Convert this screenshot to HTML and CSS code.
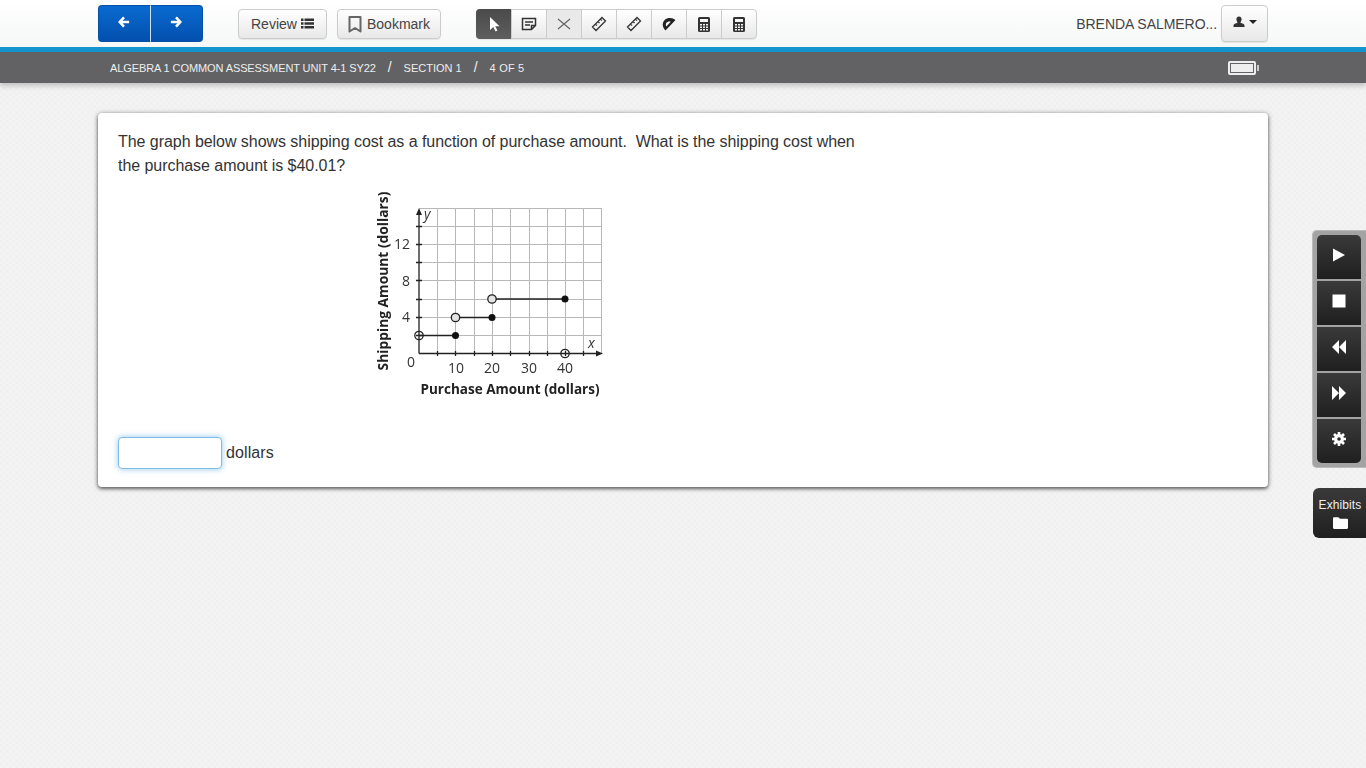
FILE: index.html
```html
<!DOCTYPE html>
<html lang="en">
<head>
<meta charset="utf-8">
<title>Assessment</title>
<link rel="stylesheet" href="styles.css">
</head>
<body>
<header class="topbar">
  <div class="wrap topbar-row">
    <div class="nav-group">
      <button class="nav-btn nav-left" aria-label="Previous"><svg width="12" height="12" viewBox="0 0 14 14"><path d="M7 1.500 2 7l5 5.500M3 7h10" fill="none" stroke="#fff" stroke-width="3"/></svg></button>
      <button class="nav-btn nav-right" aria-label="Next"><svg width="12" height="12" viewBox="0 0 14 14"><path d="M7 1.500 12 7l-5 5.500M11 7H1" fill="none" stroke="#fff" stroke-width="3"/></svg></button>
    </div>
    <button class="btn btn-review">Review <svg class="list-icon" width="13" height="11" viewBox="0 0 13 11"><path d="M0 .5h2.500v2.500H0zM3.500 .5H13v2.500H3.500zM0 4.300h2.500v2.500H0zM3.500 4.300H13v2.500H3.500zM0 8h2.500v2.500H0zM3.500 8H13v2.500H3.500z" fill="#333"/></svg></button>
    <button class="btn btn-bookmark"><svg width="14" height="17" viewBox="0 0 14 17"><path d="M1.500 1h11v14.500L7 12l-5.500 3.500z" fill="none" stroke="#666" stroke-width="2" stroke-linejoin="round"/></svg>Bookmark</button>
    <div class="tools">
      <span class="tool tool-active"><svg width="14" height="16" viewBox="0 0 14 16"><path d="M3 1v13l3.300-3 2.300 4.500 1.800-.9-2.200-4.300H12.500z" fill="#fff"/></svg></span>
      <span class="tool"><svg width="16" height="14" viewBox="0 0 16 14"><path d="M1.500 1.500h13v7l-4 4h-9zM4 5h8M4 8h5M10.500 12.500V8.500h4" fill="none" stroke="#333" stroke-width="1.500"/></svg></span>
      <span class="tool tool-off"><svg width="14" height="12" viewBox="0 0 14 12"><path d="M1 1l12 10M13 1 1 11" fill="none" stroke="#666" stroke-width="1.200"/></svg></span>
      <span class="tool"><svg width="16" height="16" viewBox="0 0 16 16"><path d="M1.500 11 11 1.500l3.500 3.500L5 14.500zM4.500 8l1.500 1.500M7 5.500 8.500 7M9.500 3l1.500 1.500" fill="none" stroke="#333" stroke-width="1.300"/></svg></span>
      <span class="tool"><svg width="16" height="16" viewBox="0 0 16 16"><path d="M1.500 11 11 1.500l3.500 3.500L5 14.500zM4.500 8l1.500 1.500M7 5.500 8.500 7M9.500 3l1.500 1.500" fill="none" stroke="#333" stroke-width="1.300"/></svg></span>
      <span class="tool"><svg width="14" height="14" viewBox="0 0 14 14"><path fill-rule="evenodd" d="M3.500 13.500 13.500 3C10.500.3 5.500.2 2.700 2.900S0 10.300 3.500 13.500zM4.300 9.500 8.800 4.700C7 4 5.200 4.600 4.400 5.800S3.700 8.300 4.300 9.500z" fill="#222"/></svg></span>
      <span class="tool"><svg width="12" height="15" viewBox="0 0 12 15"><path fill-rule="evenodd" d="M1.500 0h9A1.500 1.500 0 0 1 12 1.500v12a1.500 1.500 0 0 1-1.500 1.500h-9A1.500 1.500 0 0 1 0 13.500v-12A1.500 1.500 0 0 1 1.500 0zM2 2v3h8V2zM2 7v1.500h2V7zm3 0v1.500h2V7zm3 0v1.500h2V7zM2 9.500V11h2V9.500zm3 0V11h2V9.500zm3 0V11h2V9.500zM2 12v1.500h2V12zm3 0v1.500h2V12zm3 0v1.500h2V12z" fill="#333"/></svg></span>
      <span class="tool"><svg width="12" height="15" viewBox="0 0 12 15"><path fill-rule="evenodd" d="M1.500 0h9A1.500 1.500 0 0 1 12 1.500v12a1.500 1.500 0 0 1-1.500 1.500h-9A1.500 1.500 0 0 1 0 13.500v-12A1.500 1.500 0 0 1 1.500 0zM2 2v3h8V2zM2 7v1.500h2V7zm3 0v1.500h2V7zm3 0v1.500h2V7zM2 9.500V11h2V9.500zm3 0V11h2V9.500zm3 0V11h2V9.500zM2 12v1.500h2V12zm3 0v1.500h2V12zm3 0v1.500h2V12z" fill="#333"/></svg></span>
    </div>
    <div class="user">
      <span class="user-name">BRENDA SALMERO...</span>
      <button class="btn btn-user" aria-label="User menu"><svg width="12" height="12" viewBox="0 0 12 12"><path d="M6 .5c1.700 0 2.600 1.200 2.600 2.800S7.700 6 7.400 6.700c1.900.6 4.100 1 4.100 2.800V11H.5V9.500c0-1.800 2.200-2.200 4.100-2.800C4.300 6 3.400 4.900 3.400 3.300S4.300.5 6 .5z" fill="#333"/></svg><span class="caret"></span></button>
    </div>
  </div>
</header>
<div class="crumbs">
  <div class="wrap crumbs-row">
    <span class="crumb-title">ALGEBRA 1 COMMON ASSESSMENT UNIT 4-1 SY22</span>
    <span class="sep">/</span>
    <span>SECTION 1</span>
    <span class="sep">/</span>
    <span class="crumb-count">4 OF 5</span>
    <span class="battery"><span class="battery-fill"></span></span>
  </div>
</div>
<main class="wrap">
  <section class="card">
    <p class="question">The graph below shows shipping cost as a function of purchase amount.&nbsp; What is the shipping cost when the purchase amount is $40.01?</p>
    <div class="figure">
      <svg class="graph" width="240" height="215" viewBox="370 188 240 215">
        <g stroke="#b8b8b8" stroke-width="1" fill="none">
          <path d="M437.500 208V354M455.500 208V354M474.500 208V354M492.500 208V354M510.500 208V354M529.500 208V354M547.500 208V354M565.500 208V354M583.500 208V354M601.500 208V354"/>
          <path d="M419 208.500H602M419 226.500H602M419 244.500H602M419 262.500H602M419 280.500H602M419 299.500H602M419 317.500H602M419 335.500H602"/>
        </g>
        <g stroke="#222" stroke-width="1.300" fill="none">
          <path d="M419 353.500H598M419 353.500V212"/>
          <path d="M416 226.500h6M416 244.500h6M416 262.500h6M416 280.500h6M416 299.500h6M416 317.500h6M416 335.500h6"/>
          <path d="M437.500 351v5M455.500 351v5M474.500 351v5M492.500 351v5M510.500 351v5M529.500 351v5M547.500 351v5M565.500 351v5M583.500 351v5"/>
        </g>
        <path d="M419 208l-3 7h6zM603 353.500l-7-3v6z" fill="#222"/>
        <g stroke="#222" stroke-width="1.500" fill="none">
          <path d="M419 335.500H455.500M455.500 317.500H492M492 299H565"/>
        </g>
        <g fill="#e4e4e4" stroke="#222" stroke-width="1.300">
          <circle cx="455.500" cy="317.500" r="4.200"/><circle cx="492" cy="299" r="4.200"/>
        </g>
        <g fill="none" stroke="#222" stroke-width="1.300">
          <circle cx="419" cy="335.500" r="4.200"/><circle cx="565" cy="353.500" r="4.200"/>
        </g>
        <g fill="#111">
          <circle cx="455.500" cy="335.500" r="3.500"/><circle cx="492" cy="317.500" r="3.500"/><circle cx="565" cy="299" r="3.500"/>
        </g>
        <g class="g-num">
          <text x="410" y="249" text-anchor="end">12</text>
          <text x="410" y="286" text-anchor="end">8</text>
          <text x="410" y="322" text-anchor="end">4</text>
          <text x="411" y="367" text-anchor="middle">0</text>
          <text x="456" y="373" text-anchor="middle">10</text>
          <text x="492" y="373" text-anchor="middle">20</text>
          <text x="529" y="373" text-anchor="middle">30</text>
          <text x="565" y="373" text-anchor="middle">40</text>
          <text class="g-var" x="424" y="219">y</text>
          <text class="g-var" x="588" y="348">x</text>
        </g>
        <text class="g-title" x="510" y="393.500" text-anchor="middle">Purchase Amount (dollars)</text>
        <text class="g-title g-title-y" transform="translate(387.500 281) rotate(-90)" text-anchor="middle">Shipping Amount (dollars)</text>
      </svg>
    </div>
    <div class="answer">
      <input class="answer-input" type="text" aria-label="Answer">
      <span class="unit">dollars</span>
    </div>
  </section>
</main>
<aside class="player">
  <button class="p-btn" aria-label="Play"><svg width="14" height="14" viewBox="0 0 14 14"><path d="M1 .5v13L13 7z" fill="#fff"/></svg></button>
  <button class="p-btn" aria-label="Stop"><svg width="14" height="14" viewBox="0 0 14 14"><path d="M.500.500h13v13H.500z" fill="#fff"/></svg></button>
  <button class="p-btn" aria-label="Rewind"><svg width="14" height="14" viewBox="0 0 14 14"><path d="M7 0 0 7l7 7zM14 0 7 7l7 7z" fill="#fff"/></svg></button>
  <button class="p-btn" aria-label="Forward"><svg width="14" height="14" viewBox="0 0 14 14"><path d="M0 0 7 7l-7 7zM7 0l7 7-7 7z" fill="#fff"/></svg></button>
  <button class="p-btn" aria-label="Settings"><svg width="14" height="14" viewBox="0 0 14 14"><circle cx="7" cy="7" r="3.500" fill="none" stroke="#fff" stroke-width="3"/><path d="M7 0v14M0 7h14M2 2l10 10M12 2 2 12" stroke="#fff" stroke-width="2.600"/><circle cx="7" cy="7" r="1.800" fill="#2a2a2a"/></svg></button>
</aside>
<aside class="exhibits">
  <span>Exhibits</span>
  <svg width="15" height="13" viewBox="0 0 14 12"><path d="M0 2a1 1 0 0 1 1-1h4l1.500 1.500H13a1 1 0 0 1 1 1V11a1 1 0 0 1-1 1H1a1 1 0 0 1-1-1z" fill="#fff"/></svg>
</aside>
</body>
</html>
```
FILE: styles.css
```css
* { box-sizing: border-box; }
html, body { height: 100%; }
body {
  margin: 0;
  overflow: hidden;
  font-family: "Liberation Sans", Arial, sans-serif;
  color: #333;
  background: repeating-conic-gradient(#f3f3f3 0 25%, #f0f0f0 0 50%) 0 0 / 6px 6px;
}
button { font-family: inherit; cursor: pointer; }
.wrap { width: 1170px; margin: 0 auto; }
.topbar {
  height: 52px;
  background: linear-gradient(#fff, #f6f7f7);
  border-bottom: 5px solid #1495cf;
}
.topbar-row { display: flex; align-items: flex-start; height: 47px; }
.nav-group { display: flex; margin-top: 5px; margin-right: 35px; }
.nav-btn {
  width: 52.500px; height: 37px; padding: 0 0 3px;
  display: flex; align-items: center; justify-content: center;
  border: 1px solid #0550a5;
  background: linear-gradient(#0a6ad0, #0350ae);
}
.nav-left { border-radius: 4px 0 0 4px; border-right-color: #cfe0f0; }
.nav-right { border-radius: 0 4px 4px 0; border-left: 0; }
.btn {
  height: 30px; margin-top: 9px;
  display: flex; align-items: center;
  border: 1px solid #ccc; border-radius: 4px;
  background: linear-gradient(#fff, #e8e8e8);
  box-shadow: 0 1px 1px rgba(0,0,0,.08);
  font-size: 14px; color: #444;
}
.btn-review { width: 89px; padding: 0 0 0 12px; margin-right: 10px; }
.list-icon { margin-left: 4px; margin-top: -2px; }
.btn-bookmark { width: 104px; padding: 0 0 0 10px; margin-right: 35px; gap: 5px; }
.tools {
  display: flex; margin-top: 9px; height: 30px;
  border: 1px solid #ccc; border-radius: 4px;
  background: linear-gradient(#fff, #e8e8e8);
  box-shadow: 0 1px 1px rgba(0,0,0,.08);
}
.tool {
  width: 35px; display: flex; align-items: center; justify-content: center;
  border-left: 1px solid #ccc;
}
.tool:first-child { border-left: 0; width: 35px; margin: -1px 0 -1px -1px; border-radius: 4px 0 0 4px; }
.tool-active { background: linear-gradient(#4a4a4a, #5e5e5e); }
.tool-off { background: #e9e9e9; }
.user { margin-left: auto; display: flex; align-items: flex-start; }
.user-name { font-size: 14px; color: #444; margin-top: 16px; margin-right: 4px; letter-spacing: -.05px; }
.btn-user { width: 47px; height: 37px; margin-top: 5px; padding: 0 0 3px 11px; gap: 4px; }
.caret { width: 0; height: 0; border: 4px solid transparent; border-top-color: #222; border-bottom: 0; }
.crumbs {
  height: 31px;
  background: #626264;
  box-shadow: 0 3px 5px rgba(0,0,0,.2);
  color: #eee;
  font-size: 11px;
}
.crumbs-row { display: flex; align-items: center; height: 100%; padding: 0 12px 0 12px; }
.crumb-title { letter-spacing: -.1px; }
.crumb-count { letter-spacing: .2px; }
.sep { margin: -2px 12px 0; font-size: 14px; }
.battery {
  position: relative;
  margin-left: auto; width: 28px; height: 14px;
  border: 2px solid #eee; border-radius: 2px; padding: 1px;
}
.battery::after {
  content: ""; position: absolute; right: -5px; top: 2px;
  width: 2px; height: 6px; background: #ccc;
}
.battery-fill { display: block; height: 100%; background: #eee; }
.card {
  margin-top: 30px;
  height: 374px;
  padding: 17px 20px 0;
  background: #fff;
  border-radius: 4px;
  box-shadow: 0 1px 5px rgba(0,0,0,.55), 0 2px 3px rgba(0,0,0,.3);
}
.question { margin: 0; width: 745px; font-size: 16px; line-height: 24px; color: #333; letter-spacing: -.05px; }
.figure { height: 249px; padding-left: 252px; }
.graph { display: block; margin-top: 10px; filter: blur(.35px); }
.graph text { font-family: "Open Sans", "Liberation Sans", sans-serif; fill: #333; }
.g-num text { font-size: 14px; }
.graph .g-var { font-style: italic; font-size: 14px; }
.graph .g-title { font-size: 13.500px; font-weight: 700; fill: #222; }
.graph .g-title-y { font-size: 13.800px; }
.answer { display: flex; align-items: center; font-size: 16px; gap: 4px; color: #333; }
.unit { letter-spacing: .1px; }
.answer-input {
  width: 104px; height: 32px; padding: 0;
  border: 1px solid #7fbce8; border-radius: 4px;
  box-shadow: 0 0 6px rgba(102,175,233,.7);
  outline: none; background: #fff;
}
.player {
  position: absolute; left: 1312px; top: 230px;
  width: 54px; height: 238px;
  padding: 4px 4px 4px 4px;
  background: #a3a3a3;
  border-radius: 5px 0 0 5px;
  display: flex; flex-direction: column; gap: 2px;
  border: 1px solid #bbb; border-right: 0;
}
.p-btn {
  flex: 1; border: 0; padding: 0 0 5px; width: 44px;
  display: flex; align-items: center; justify-content: center;
  background: linear-gradient(#3a3a3a, #1f1f1f);
}
.p-btn:first-child { border-radius: 5px 5px 0 0; }
.p-btn:last-child { border-radius: 0 0 5px 5px; }
.exhibits {
  position: absolute; left: 1313px; top: 488px;
  width: 53px; height: 50px;
  background: linear-gradient(#3a3a3a, #1f1f1f);
  border-radius: 6px 0 0 6px;
  color: #eee; font-size: 12px; letter-spacing: .1px;
  display: flex; flex-direction: column; align-items: center;
  padding: 10px 0 0 1px; gap: 4px;
}
```
